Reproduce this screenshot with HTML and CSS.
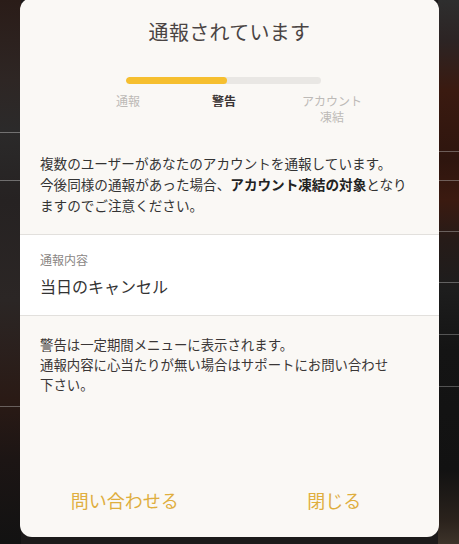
FILE: index.html
```html
<!DOCTYPE html>
<html lang="ja">
<head>
<meta charset="utf-8">
<link rel="stylesheet" href="styles.css">
</head>
<body>
<div class="dialog">
  <h1 class="title">通報されています</h1>
  <div class="track"><div class="fill"></div></div>
  <div class="steps">
    <span class="step">通報</span>
    <span class="step current">警告</span>
    <span class="step">アカウント<br>凍結</span>
  </div>
  <p class="message">複数のユーザーがあなたのアカウントを通報しています。<br>今後同様の通報があった場合、<b>アカウント凍結の対象</b>となり<br>ますのでご注意ください。</p>
  <div class="detail">
    <div class="detail-label">通報内容</div>
    <div class="detail-value">当日のキャンセル</div>
  </div>
  <p class="note">警告は一定期間メニューに表示されます。<br>通報内容に心当たりが無い場合はサポートにお問い合わせ<br>下さい。</p>
  <div class="actions">
    <button class="action">問い合わせる</button>
    <button class="action">閉じる</button>
  </div>
</div>
</body>
</html>
```
FILE: styles.css
```css
html, body {
  margin: 0;
  padding: 0;
  height: 544px;
  overflow: hidden;
}
body {
  font-family: "Noto Sans CJK JP", "Noto Sans", sans-serif;
  background-color: #1c1a1a;
  background-image:
    linear-gradient(to bottom, transparent 132px, rgba(200,200,200,0.45) 132px, rgba(200,200,200,0.45) 133px, transparent 133px, transparent 180px, rgba(200,200,200,0.45) 180px, rgba(200,200,200,0.45) 181px, transparent 181px, transparent 406px, rgba(200,200,200,0.4) 406px, rgba(200,200,200,0.4) 407px, transparent 407px),
    linear-gradient(to bottom, #2a1c18 0px, #2e2624 80px, #2b2a2a 130px, #262222 200px, #2b2625 300px, #2a1a15 400px, #1c1514 460px, #121212 544px),
    linear-gradient(to bottom, transparent 151px, rgba(200,200,200,0.4) 151px, rgba(200,200,200,0.4) 152px, transparent 152px, transparent 180px, rgba(200,200,200,0.4) 180px, rgba(200,200,200,0.4) 181px, transparent 181px, transparent 231px, rgba(200,200,200,0.4) 231px, rgba(200,200,200,0.4) 232px, transparent 232px, transparent 282px, rgba(200,200,200,0.4) 282px, rgba(200,200,200,0.4) 283px, transparent 283px, transparent 334px, rgba(200,200,200,0.35) 334px, rgba(200,200,200,0.35) 335px, transparent 335px, transparent 386px, rgba(200,200,200,0.35) 386px, rgba(200,200,200,0.35) 387px, transparent 387px),
    linear-gradient(to bottom, #2e2e2e 0px, #2c2424 40px, #3a1a10 90px, #2e150e 160px, #3b1a10 200px, #261b18 240px, #1d1d1d 290px, #141414 350px, #121212 470px, #2a221c 520px, #3d332a 544px);
  background-repeat: no-repeat;
  background-size: 21px 544px, 21px 544px, 21px 544px, 21px 544px;
  background-position: 0 0, 0 0, 438px 0, 438px 0;
}
.dialog {
  box-sizing: border-box;
  width: 419px;
  height: 539px;
  margin: -2px 0 0 20px;
  background: #faf8f5;
  border-radius: 12px;
  display: flex;
  flex-direction: column;
  overflow: hidden;
  color: #333;
}
.title {
  margin: 20px 0 0;
  font-size: 20px;
  line-height: 28px;
  font-weight: 400;
  text-align: center;
  color: #4a4443;
  letter-spacing: 0.3px;
}
.track {
  width: 195px;
  height: 7px;
  margin: 31px 0 0 106px;
  border-radius: 4px;
  background: #e9e7e4;
  overflow: hidden;
}
.fill {
  width: 52%;
  height: 100%;
  border-radius: 4px;
  background: #f6bf2f;
}
.steps {
  width: 246px;
  margin: 9px 0 0 96px;
  display: flex;
  justify-content: space-between;
  align-items: flex-start;
}
.step {
  font-size: 12px;
  line-height: 15.5px;
  color: #bdbab7;
  text-align: center;
}
.step.current {
  color: #3a3434;
  font-weight: 700;
  margin-left: 6px;
}
.message {
  margin: 0;
  padding: 29px 20px 18px;
  font-size: 13.6px;
  line-height: 21px;
  color: #333;
  border-bottom: 1px solid #e2e0dd;
}
.message b {
  font-weight: 700;
  color: #222;
}
.detail {
  background: #fff;
  padding: 17px 20px 18px;
  border-bottom: 1px solid #e2e0dd;
}
.detail-label {
  font-size: 12px;
  line-height: 16px;
  color: #8a8684;
}
.detail-value {
  margin-top: 7px;
  font-size: 16px;
  line-height: 22px;
  color: #333;
}
.note {
  margin: 0;
  padding: 18px 20px 0;
  font-size: 13.4px;
  line-height: 20px;
  color: #3a3636;
}
.actions {
  margin-top: auto;
  margin-bottom: 12px;
  display: flex;
}
.action {
  flex: 1;
  height: 50px;
  border: 0;
  background: transparent;
  font-family: inherit;
  font-size: 18px;
  color: #dfae3e;
  padding: 0;
}
```
